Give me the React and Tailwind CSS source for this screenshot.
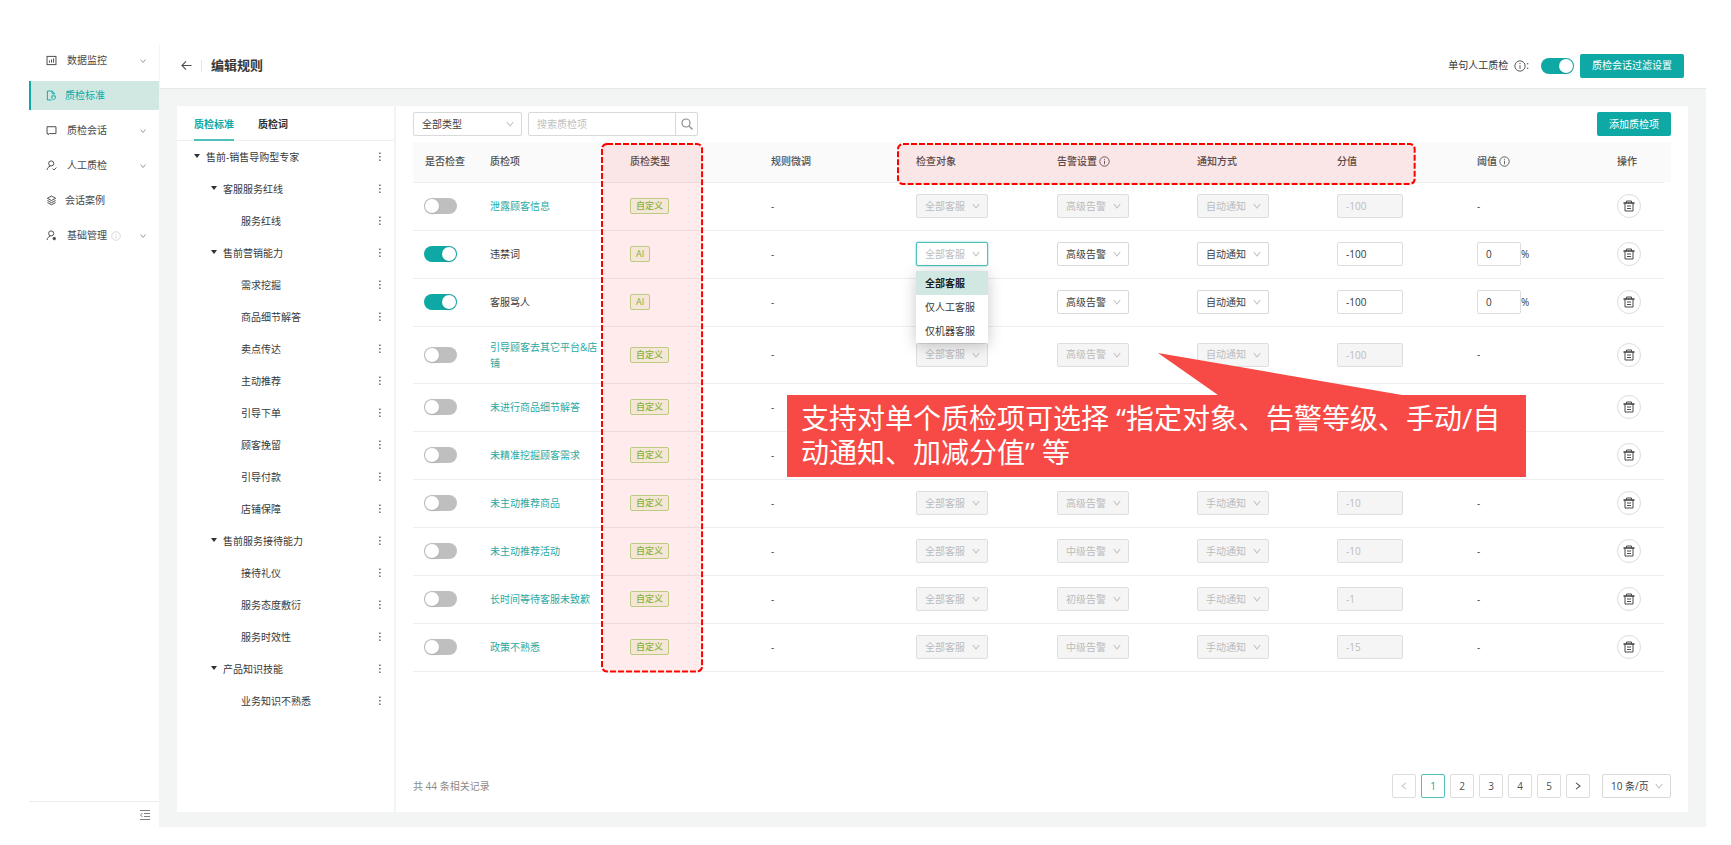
import { useState } from 'react';

const menu = [
  { label: '数据监控', icon: 'chart', arrow: true },
  { label: '质检标准', icon: 'doc', active: true },
  { label: '质检会话', icon: 'chat', arrow: true },
  { label: '人工质检', icon: 'user', arrow: true },
  { label: '会话案例', icon: 'layers' },
  { label: '基础管理', icon: 'userCog', arrow: true, info: true },
];

const tree = [
  { level: 0, label: '售前-销售导购型专家' },
  { level: 1, label: '客服服务红线' },
  { level: 2, label: '服务红线' },
  { level: 1, label: '售前营销能力' },
  { level: 2, label: '需求挖掘' },
  { level: 2, label: '商品细节解答' },
  { level: 2, label: '卖点传达' },
  { level: 2, label: '主动推荐' },
  { level: 2, label: '引导下单' },
  { level: 2, label: '顾客挽留' },
  { level: 2, label: '引导付款' },
  { level: 2, label: '店铺保障' },
  { level: 1, label: '售前服务接待能力' },
  { level: 2, label: '接待礼仪' },
  { level: 2, label: '服务态度敷衍' },
  { level: 2, label: '服务时效性' },
  { level: 1, label: '产品知识技能' },
  { level: 2, label: '业务知识不熟悉' },
];

const rules = [
  { name: '泄露顾客信息', level: '高级告警', notify: '自动通知', score: '-100' },
  { name: '违禁词', ai: true, level: '高级告警', notify: '自动通知', score: '-100', open: true },
  { name: '客服骂人', ai: true, level: '高级告警', notify: '自动通知', score: '-100' },
  { name: '引导顾客去其它平台&店铺', level: '高级告警', notify: '自动通知', score: '-100' },
  { name: '未进行商品细节解答', level: '高级告警', notify: '自动通知', score: '-100' },
  { name: '未精准挖掘顾客需求', level: '高级告警', notify: '自动通知', score: '-100' },
  { name: '未主动推荐商品', level: '高级告警', notify: '手动通知', score: '-10' },
  { name: '未主动推荐活动', level: '中级告警', notify: '手动通知', score: '-10' },
  { name: '长时间等待客服未致歉', level: '初级告警', notify: '手动通知', score: '-1' },
  { name: '政策不熟悉', level: '中级告警', notify: '手动通知', score: '-15' },
];

const columns = [
  { label: '是否检查', width: 'w-[65px]' },
  { label: '质检项', width: 'w-[140px]' },
  { label: '质检类型', width: 'w-[141px]' },
  { label: '规则微调', width: 'w-[145px]' },
  { label: '检查对象', width: 'w-[141px]' },
  { label: '告警设置', width: 'w-[140px]', info: true },
  { label: '通知方式', width: 'w-[140px]' },
  { label: '分值', width: 'w-[140px]' },
  { label: '阈值', width: 'w-[140px]', info: true },
  { label: '操作', width: 'w-[59px]' },
];

const indent = ['pl-[17px]', 'pl-[34px]', 'pl-[64px]'];

function MenuIcon({ name }) {
  const paths = {
    chart: <><rect x="1.5" y="2" width="13" height="12" /><path d="M5 11V8M8 11V6.500M11 11V5" /></>,
    doc: <><path d="M8 14.500H2V1.500H9L13 5.500" /><path d="M9 1.500V5.500H13" /><path d="M8.500 8.500h5v3.500l-2.500 2.500-2.500-2.500z" /></>,
    chat: <path d="M1.500 2.500H14.500V12.500H5L3 14V12.500H1.500Z" />,
    user: <><circle cx="7.500" cy="5" r="3.700" /><path d="M1.500 14.500C2 11.500 3.500 10 6 9M9.500 12.500L11.500 14.500L15 11" /></>,
    layers: <><path d="M8 1.500L14 4.800L8 8L2 4.800Z" /><path d="M2 8L8 11.200L14 8M2 11L8 14.200L14 11" /></>,
    userCog: <><circle cx="7.500" cy="5" r="3.700" /><path d="M1.500 14.500C2 11.500 3.500 10 6 9" /><circle cx="12" cy="12.500" r="1.800" fill="currentColor" /></>,
  };
  return (
    <svg viewBox="0 0 16 16" className="size-[11px] shrink-0" fill="none" stroke="currentColor" strokeWidth="1.4">
      {paths[name]}
    </svg>
  );
}

function Chevron({ className }) {
  return (
    <svg viewBox="0 0 10 10" className={className} fill="none" stroke="currentColor" strokeWidth="1.3">
      <path d="M1 2.500L5 7.500L9 2.500" />
    </svg>
  );
}

function InfoIcon({ className }) {
  return (
    <svg viewBox="0 0 14 14" className={className} fill="none" stroke="currentColor" strokeWidth="1.1">
      <circle cx="7" cy="7" r="6" />
      <path d="M7 6V10.500M7 3.500V4.800" />
    </svg>
  );
}

function Switch({ checked: initial, label }) {
  const [checked, setChecked] = useState(initial);
  return (
    <label className="relative block w-[33px] h-4 shrink-0 cursor-pointer">
      <input
        type="checkbox"
        role="switch"
        aria-label={label}
        checked={checked}
        onChange={e => setChecked(e.target.checked)}
        className="peer appearance-none block w-full h-full rounded-full bg-[#bfbfbf] checked:bg-[#0fa9a5]"
      />
      <span className="absolute top-px left-px size-[14px] rounded-full bg-white shadow-sm peer-checked:left-[18px]" />
    </label>
  );
}

function Select({ label, options, disabled, width = 'w-[72px]', look }) {
  const style = look || (disabled
    ? 'bg-[#f5f5f5] border-[#dedede] text-[#bcbcbc]'
    : 'bg-white border-[#d9d9d9] text-[#404040]');
  return (
    <div className={`relative ${width}`}>
      <select
        aria-label={label}
        disabled={disabled}
        className={`appearance-none block w-full h-6 pl-2 border rounded-xs outline-none opacity-100 ${style}`}
      >
        {options.map(o => <option key={o}>{o}</option>)}
      </select>
      <Chevron className="absolute right-2 top-2 size-2 text-[#bfbfbf] pointer-events-none" />
    </div>
  );
}

function Sidebar() {
  return (
    <aside className="w-[130px] shrink-0 flex flex-col bg-white">
      <nav className="flex flex-col gap-[6px] pt-px">
        {menu.map(m => (
          <a
            key={m.label}
            href="#"
            className={`h-[29px] flex items-center pl-[15px] pr-[13px] border-l-2 ${
              m.active ? 'bg-[#d1e8e2] border-[#0fa9a5] text-[#0fa9a5]' : 'border-transparent text-[#484848]'
            }`}
          >
            <MenuIcon name={m.icon} />
            <span className={m.arrow ? 'ml-[10px]' : 'ml-2'}>{m.label}</span>
            {m.info && <InfoIcon className="ml-1 size-[10px] text-[#d0d0d0]" />}
            {m.arrow && <Chevron className="ml-auto size-[6px] text-[#808080]" />}
          </a>
        ))}
      </nav>
      <div className="mt-auto h-[26px] border-t border-[#ececec] flex items-center justify-end pr-2">
        <button aria-label="收起菜单" className="text-[#808080]">
          <svg viewBox="0 0 12 12" className="size-3" fill="none" stroke="currentColor">
            <path d="M1 1.500H11M5 4.500H11M5 7.500H11M1 10.500H11M3.500 4L1.500 6L3.500 8" />
          </svg>
        </button>
      </div>
    </aside>
  );
}

function TreePanel() {
  return (
    <section className="w-[219px] shrink-0 border-r-2 border-[#f2f4f4]">
      <div role="tablist" className="h-[35px] px-[17px] flex gap-6 border-b border-[#eeeeee] font-bold">
        <button role="tab" aria-selected="true" className="h-[35px] border-b-2 border-[#4fc0bc] text-[#0fa9a5] pt-[3px]">质检标准</button>
        <button role="tab" aria-selected="false" className="h-[35px] border-b-2 border-transparent text-[#303030] pt-[3px]">质检词</button>
      </div>
      <ul>
        {tree.map(n => (
          <li key={n.label} className={`h-8 flex items-center pr-3 ${indent[n.level]}`}>
            {n.level < 2 && (
              <svg viewBox="0 0 6 4" className="w-[6px] h-1 mr-[6px] mb-[3px] text-[#303030]" fill="currentColor">
                <path d="M0 0H6L3 4Z" />
              </svg>
            )}
            <span>{n.label}</span>
            <button aria-label="更多" className="ml-auto">
              <svg viewBox="0 0 4 10" className="w-1 h-[10px]" fill="#707070">
                <path d="M1 0.500h1.600v1.600h-1.600zM1 4h1.600v1.600h-1.600zM1 7.500h1.600v1.600h-1.600z" />
              </svg>
            </button>
          </li>
        ))}
      </ul>
    </section>
  );
}

function TargetMenu() {
  return (
    <div role="listbox" aria-label="检查对象" className="absolute z-10 left-0 top-[29px] w-[72px] bg-white shadow-[0_3px_14px_rgba(0,0,0,0.22)]">
      <button role="option" aria-selected="true" className="block w-full h-6 pl-[9px] text-left font-bold text-[#202020] bg-[#d1e8e2]">全部客服</button>
      <button role="option" aria-selected="false" className="block w-full h-6 pl-[9px] text-left">仅人工客服</button>
      <button role="option" aria-selected="false" className="block w-full h-6 pl-[9px] text-left">仅机器客服</button>
    </div>
  );
}

function RuleRow({ rule }) {
  const on = Boolean(rule.ai);
  return (
    <tr className="h-12 border-b border-[#eeeeee]">
      <td className="pl-[11px]"><Switch checked={on} label={rule.name} /></td>
      <td className={`pl-3 pr-4 py-3 leading-4 break-all ${on ? '' : 'text-[#27aaa6]'}`}>{rule.name}</td>
      <td className="pl-3">
        <span className="block w-fit h-4 px-[5px] border border-[#b7dd8c] rounded-xs bg-[#f5faea] text-[9px] leading-[14px] font-medium text-[#7cc242]">
          {on ? 'AI' : '自定义'}
        </span>
      </td>
      <td className="pl-3">-</td>
      <td className="pl-3">
        <div className="relative">
          <Select
            label="检查对象"
            options={['全部客服', '仅人工客服', '仅机器客服']}
            disabled={!on}
            look={rule.open ? 'bg-white border-[#4fc0bc] text-[#bcbcbc] shadow-[0_0_2px_#4fc0bc]' : undefined}
          />
          {rule.open && <TargetMenu />}
        </div>
      </td>
      <td className="pl-3"><Select label="告警设置" options={[rule.level]} disabled={!on} /></td>
      <td className="pl-3"><Select label="通知方式" options={[rule.notify]} disabled={!on} /></td>
      <td className="pl-3">
        <input
          aria-label="分值"
          defaultValue={rule.score}
          disabled={!on}
          className="block w-[66px] h-6 px-2 border border-[#dedede] rounded-xs bg-white disabled:bg-[#f5f5f5] disabled:text-[#bcbcbc]"
        />
      </td>
      <td className="pl-3">
        {on ? (
          <label className="flex items-center">
            <input defaultValue="0" className="w-11 h-6 px-2 border border-[#dedede] rounded-xs bg-white" />
            %
          </label>
        ) : '-'}
      </td>
      <td className="pl-3">
        <button aria-label="删除" className="size-6 flex items-center justify-center rounded-full border border-[#dcdcdc] text-[#484848]">
          <svg viewBox="0 0 12 12" className="size-3" fill="none" stroke="currentColor">
            <path d="M0.500 3H11.500" strokeWidth="1.6" />
            <path d="M3.500 3V1H8.500V3M2 3V11H10V3M4 6H8M4 8.500H8" />
          </svg>
        </button>
      </td>
    </tr>
  );
}

function Highlight({ className }) {
  return (
    <svg className={`absolute overflow-visible pointer-events-none ${className}`}>
      <rect
        width="100%" height="100%" rx="5"
        fill="#ff0000" fillOpacity="0.08"
        stroke="#ff0000" strokeWidth="2" strokeDasharray="6 2"
      />
    </svg>
  );
}

function Callout() {
  return (
    <div className="absolute z-20 left-[29.9%] top-[253px] w-[59.1%] h-[82px] px-[14px] pt-[6px] bg-[#f74a46] text-white text-[28px] leading-[34px]">
      <svg viewBox="0 0 244 43" className="absolute left-[371px] bottom-[calc(100%-1px)] w-[244px] h-[43px]" fill="#f74a46">
        <path d="M0 0L244 42V43H61L60 42Z" />
      </svg>
      支持对单个质检项可选择 “指定对象、告警等级、手动/自动通知、加减分值” 等
    </div>
  );
}

function RulePanel() {
  return (
    <section className="flex-1 min-w-0 flex flex-col pl-[17px] pr-[17px] pt-[6px] pb-[14px]">
      <div className="flex items-center mb-[6px]">
        <Select label="类型" options={['全部类型']} width="w-[109px]" />
        <div className="ml-[6px] flex h-6 w-[170px] border border-[#d9d9d9] rounded-xs">
          <input aria-label="搜索质检项" placeholder="搜索质检项" className="flex-1 min-w-0 px-2 outline-none placeholder:text-[#bfbfbf]" />
          <button aria-label="搜索" className="w-[22px] flex items-center justify-center border-l border-[#d9d9d9] text-[#8c8c8c]">
            <svg viewBox="0 0 12 12" className="size-3" fill="none" stroke="currentColor" strokeWidth="1.2">
              <circle cx="5" cy="5" r="4" />
              <path d="M8 8L11.500 11.500" />
            </svg>
          </button>
        </div>
        <button className="ml-auto h-6 px-3 bg-[#0fa9a5] text-white rounded-xs">添加质检项</button>
      </div>

      <div className="relative mr-[7px]">
        <table className="w-full table-fixed text-left">
          <thead>
            <tr className="h-10 bg-[#fafafa] border-b border-[#eeeeee]">
              {columns.map(c => (
                <th key={c.label} className={`${c.width} pl-3 font-medium text-[#505050] whitespace-nowrap last:shadow-[7px_0_0_#fafafa]`}>
                  {c.label}
                  {c.info && <InfoIcon className="inline ml-[2px] mb-[2px] size-[11px]" />}
                </th>
              ))}
            </tr>
          </thead>
          <tbody>
            {rules.map(r => <RuleRow key={r.name} rule={r} />)}
          </tbody>
        </table>
        <Highlight className="left-[15.1%] top-[2px] w-[8%] h-[calc(100%-2px)]" />
        <Highlight className="left-[38.8%] top-[2px] w-[41.3%] h-10" />
        <Callout />
      </div>

      <div className="mt-auto flex items-center">
        <span className="mr-auto text-[#8c8c8c]">共 44 条相关记录</span>
        <div className="flex gap-[5px] text-[#505050]">
          <button aria-label="上一页" disabled className="size-6 border border-[#dedede] rounded-xs flex items-center justify-center text-[#c8c8c8]">
            <Chevron className="size-2 rotate-90" />
          </button>
          {[1, 2, 3, 4, 5].map(p => (
            <button
              key={p}
              className={`size-6 border rounded-xs ${p === 1 ? 'border-[#4fc0bc] text-[#0fa9a5]' : 'border-[#dedede]'}`}
            >
              {p}
            </button>
          ))}
          <button aria-label="下一页" className="size-6 border border-[#dedede] rounded-xs flex items-center justify-center">
            <Chevron className="size-2 -rotate-90" />
          </button>
        </div>
        <div className="ml-3">
          <Select label="每页条数" options={['10 条/页']} width="w-[69px]" />
        </div>
      </div>
    </section>
  );
}

export default function App() {
  return (
    <div className="min-h-screen flex bg-white pl-[29px] pr-[25px] pt-[45px] pb-[18px] text-[10px] text-[#383838] font-['Open_Sans','Noto_Sans_CJK_SC',sans-serif]">
      <Sidebar />
      <main className="flex-1 min-w-0 flex flex-col bg-[#f3f5f5]">
        <header className="h-11 shrink-0 flex items-center bg-white border-b border-[#e6e8e8] border-l border-l-[#f3f5f5] pl-[21px] pr-[22px] pb-[2px]">
          <button aria-label="返回" className="text-[#505050]">
            <svg viewBox="0 0 12 12" className="size-[11px]" fill="none" stroke="currentColor" strokeWidth="1.2">
              <path d="M11.500 6H1M5.500 1.500L1 6L5.500 10.500" />
            </svg>
          </button>
          <span className="ml-[9px] h-3 border-l border-[#e6e6e6]" />
          <h1 className="ml-[9px] text-[13px] font-bold">编辑规则</h1>
          <span className="ml-auto">单句人工质检</span>
          <InfoIcon className="ml-[6px] size-3 text-[#505050]" />
          <span className="mr-3">:</span>
          <Switch checked label="单句人工质检" />
          <button className="ml-[6px] h-6 px-3 bg-[#0fa9a5] text-white rounded-xs">质检会话过滤设置</button>
        </header>
        <div className="flex-1 flex mt-[17px] mr-[18px] mb-[15px] ml-[18px] bg-white">
          <TreePanel />
          <RulePanel />
        </div>
      </main>
    </div>
  );
}
